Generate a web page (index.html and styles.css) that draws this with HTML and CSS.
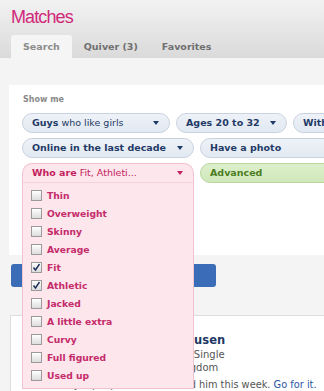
FILE: index.html
```html
<!DOCTYPE html>
<html>
<head>
<meta charset="utf-8">
<link rel="stylesheet" href="styles.css">
</head>
<body>
<header class="head">
  <h1 class="title">Matches</h1>
  <nav class="tabs">
    <span class="tab tab-active">Search</span>
    <span class="tab">Quiver (3)</span>
    <span class="tab">Favorites</span>
  </nav>
</header>
<main class="main">
  <section class="panel">
    <div class="label">Show me</div>
    <div class="row">
      <span class="pill w148"><span><b>Guys</b> who like girls</span><svg class="caret" viewBox="0 0 6 4"><path d="M0 0H6L3 4Z"/></svg></span>
      <span class="pill w111"><span><b>Ages 20 to 32</b></span><svg class="caret" viewBox="0 0 6 4"><path d="M0 0H6L3 4Z"/></svg></span>
      <span class="pill wrest"><span><b>Within 25 miles</b></span></span>
    </div>
    <div class="row">
      <span class="pill w172"><span><b>Online in the last decade</b></span><svg class="caret" viewBox="0 0 6 4"><path d="M0 0H6L3 4Z"/></svg></span>
      <span class="pill wrest"><span><b>Have a photo</b></span></span>
    </div>
    <div class="row">
      <div class="dd">
        <span class="pill pink w172"><span><b>Who are</b> Fit, Athleti...</span><svg class="caret" viewBox="0 0 6 4"><path d="M0 0H6L3 4Z"/></svg></span>
        <ul class="menu">
          <li><span class="cb"></span>Thin</li>
          <li><span class="cb"></span>Overweight</li>
          <li><span class="cb"></span>Skinny</li>
          <li><span class="cb"></span>Average</li>
          <li><span class="cb"><svg viewBox="0 0 9 9"><path d="M1.5 4.5L3.5 7L7.5 1" /></svg></span>Fit</li>
          <li><span class="cb"><svg viewBox="0 0 9 9"><path d="M1.5 4.5L3.5 7L7.5 1" /></svg></span>Athletic</li>
          <li><span class="cb"></span>Jacked</li>
          <li><span class="cb"></span>A little extra</li>
          <li><span class="cb"></span>Curvy</li>
          <li><span class="cb"></span>Full figured</li>
          <li><span class="cb"></span>Used up</li>
        </ul>
      </div>
      <span class="pill green wrest"><span><b>Advanced</b></span></span>
    </div>
  </section>
  <div class="btn">Search</div>
  <section class="card">
    <div class="photo"></div>
    <div class="info">
      <div class="name">Bo Rasmusen</div>
      <div class="meta">29 / Male / Single</div>
      <div class="meta">United Kingdom</div>
    </div>
    <p class="note">Only 4 people have admired him this week. <a class="link">Go for it.</a></p>
  </section>
</main>
</body>
</html>
```
FILE: styles.css
```css
html, body {
  margin: 0;
  padding: 0;
}
body {
  width: 324px;
  height: 391px;
  overflow: hidden;
  background: #f4f4f4;
  font-family: "DejaVu Sans", Verdana, sans-serif;
}
.head {
  height: 58px;
  background: linear-gradient(#f2f2f2, #dadada);
  padding-left: 11px;
  box-sizing: border-box;
}
.title {
  margin: 0;
  padding-top: 6px;
  height: 29px;
  box-sizing: border-box;
  font-family: "Liberation Sans", Arial, sans-serif;
  font-weight: normal;
  font-size: 18px;
  line-height: 22px;
  letter-spacing: -0.9px;
  color: #d02a7b;
}
.tabs {
  display: flex;
  margin-top: 6px;
}
.tab {
  height: 23px;
  line-height: 23px;
  padding: 0 12px;
  font-size: 9.5px;
  font-weight: bold;
  color: #6f6f6f;
}
.tab-active {
  background: #f5f5f5;
  color: #8c8c8c;
  border-radius: 3px 3px 0 0;
}
.main {
  padding: 27px 0 0 9px;
}
.panel {
  background: #fff;
  height: 170px;
  box-sizing: border-box;
  padding: 8px 0 0 13px;
  white-space: nowrap;
}
.label {
  font-size: 8px;
  font-weight: bold;
  color: #8a8a8a;
  line-height: 14px;
  padding-left: 1px;
}
.row {
  display: flex;
  gap: 6px;
  margin-top: 5px;
}
.label + .row {
  margin-top: 6px;
}
.pill {
  flex: none;
  height: 20px;
  box-sizing: border-box;
  border: 1px solid #c9d3df;
  border-radius: 10px;
  background: linear-gradient(#eef2f8, #e2e9f2);
  display: flex;
  align-items: center;
  justify-content: space-between;
  padding: 0 10px 0 9px;
  font-size: 9.5px;
  color: #1f3a66;
  line-height: 18px;
}
.pill b {
  font-weight: bold;
}
.caret {
  width: 6px;
  height: 4px;
  fill: currentColor;
}
.w148 { width: 148px; }
.w111 { width: 111px; }
.w172 { width: 172px; }
.wrest { width: 160px; }
.dd {
  position: relative;
  flex: none;
  z-index: 2;
}
.pink {
  background: #fde6ec;
  border-color: #f1c3cf;
  color: #c41f5e;
  border-radius: 10px 10px 0 0;
  border-bottom-color: #f3d3db;
}
.green {
  background: linear-gradient(#dcefcb, #d0e8bb);
  border-color: #b9d69e;
  color: #4d7d1f;
}
.menu {
  position: absolute;
  left: 0;
  top: 20px;
  width: 172px;
  height: 206px;
  box-sizing: border-box;
  margin: 0;
  padding: 3px 0 0 8px;
  list-style: none;
  background: #fde6ec;
  border: 1px solid #f1c3cf;
  border-top: none;
}
.menu li {
  display: flex;
  align-items: center;
  height: 18px;
  font-size: 9.2px;
  font-weight: bold;
  color: #c42c6a;
}
.cb {
  width: 11px;
  height: 11px;
  box-sizing: border-box;
  border: 1px solid #9a9a9a;
  background: linear-gradient(#ffffff, #dcdcdc);
  margin-right: 5px;
  display: flex;
  align-items: center;
  justify-content: center;
}
.cb svg {
  width: 9px;
  height: 9px;
  fill: none;
  stroke: #1d2f5a;
  stroke-width: 1.4;
}
.btn {
  margin: 9px 0 0 2px;
  width: 205px;
  height: 23px;
  background: #3a6cb8;
  border-radius: 3px;
  color: #fff;
  font-size: 10px;
  font-weight: bold;
  line-height: 23px;
  text-align: center;
}
.card {
  margin: 28px 0 0 1px;
  height: 90px;
  background: #fff;
  border-top: 1px solid #dedede;
  border-left: 1px solid #dedede;
  padding: 15px 0 0 14px;
  box-sizing: border-box;
  display: grid;
  grid-template-columns: 60px auto;
  align-content: start;
  column-gap: 53px;
  white-space: nowrap;
}
.photo {
  width: 60px;
  height: 42px;
  background: #cfcfcf;
}
.name {
  font-size: 11.5px;
  font-weight: bold;
  color: #1d3764;
  line-height: 16px;
  margin-top: 1px;
}
.meta {
  font-size: 10px;
  color: #555;
  line-height: 13px;
}
.note {
  grid-column: 1 / 3;
  margin: 5px 0 0 32px;
  font-size: 9.8px;
  line-height: 12px;
  color: #555;
}
.link {
  color: #2a57a4;
}
```
